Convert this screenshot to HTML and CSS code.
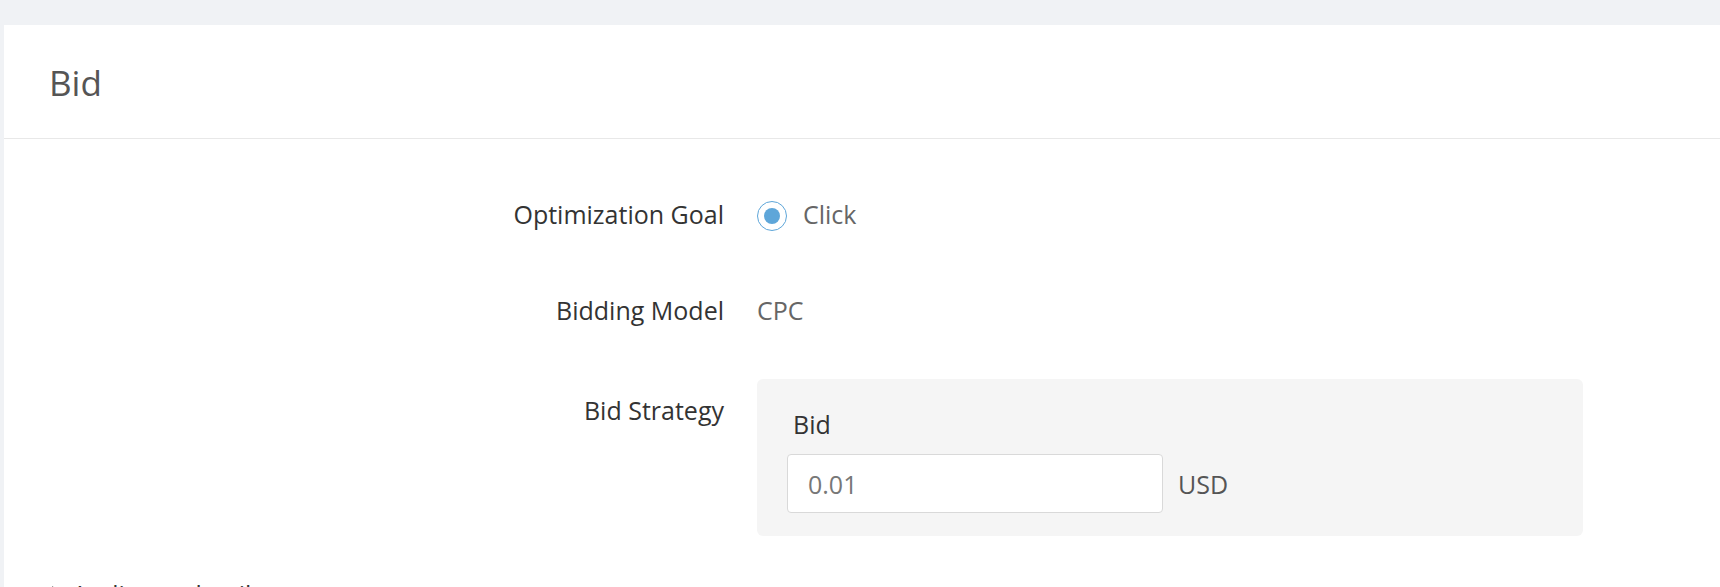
FILE: index.html
```html
<!DOCTYPE html>
<html lang="en">
<head>
<meta charset="utf-8">
<title>Bid</title>
<link rel="stylesheet" href="styles.css">
</head>
<body>
<div class="page">
  <section class="card">
    <header class="card-header"><h2 class="card-title">Bid</h2></header>
    <div class="card-body">
      <div class="form-row row-goal">
        <div class="form-label">Optimization Goal</div>
        <div class="form-control">
          <label class="radio">
            <span class="radio-circle"><span class="radio-dot"></span></span>
            <span class="radio-text">Click</span>
          </label>
        </div>
      </div>
      <div class="form-row row-model">
        <div class="form-label">Bidding Model</div>
        <div class="form-control"><span class="plain-value">CPC</span></div>
      </div>
      <div class="form-row row-strategy">
        <div class="form-label label-strategy">Bid Strategy</div>
        <div class="form-control">
          <div class="strategy-box">
            <div class="strategy-label">Bid</div>
            <div class="input-line">
              <div class="input">0.01</div>
              <span class="unit">USD</span>
            </div>
          </div>
        </div>
      </div>
      <div class="collapse-row">
        <svg class="caret" width="12" height="16" viewBox="0 0 12 16"><path d="M2 1 L9 8 L2 15" fill="none" stroke="#333" stroke-width="2"/></svg>
        <span class="collapse-text">Audience details</span>
      </div>
    </div>
  </section>
</div>
</body>
</html>
```

FILE: styles.css
```css
html, body {
  margin: 0;
  padding: 0;
  background: #f0f2f5;
  font-family: "Open Sans", "Noto Sans", sans-serif;
  overflow: hidden;
}
.page {
  padding: 25px 0 0 4px;
  height: 587px;
  box-sizing: border-box;
}
.card {
  background: #fff;
  height: 100%;
}
.card-header {
  height: 113px;
  border-bottom: 1px solid #e8e8e8;
  display: flex;
  align-items: center;
  padding-left: 45px;
}
.card-title {
  margin: 0;
  font-size: 35px;
  font-weight: 400;
  color: #555;
  line-height: 46px;
  position: relative;
  top: 1px;
}
.card-body {
  padding-top: 57px;
}
.form-row {
  display: grid;
  grid-template-columns: 720px 1fr;
  column-gap: 33px;
  font-size: 25px;
  line-height: 36px;
}
.row-goal { margin-bottom: 60px; }
.row-model { margin-bottom: 51px; }
.form-label {
  text-align: right;
  color: #333;
}
.label-strategy {
  padding-top: 13px;
}
.form-control {
  color: #666;
}
.radio {
  display: flex;
  align-items: center;
  gap: 16px;
  height: 36px;
  position: relative;
  top: 2px;
}
.radio-circle {
  width: 30px;
  height: 30px;
  box-sizing: border-box;
  border: 1px solid #5ea6d9;
  border-radius: 50%;
  display: flex;
  align-items: center;
  justify-content: center;
  background: #fff;
}
.radio-dot {
  width: 16px;
  height: 16px;
  border-radius: 50%;
  background: #5ea6d9;
}
.radio-text {
  color: #666;
  position: relative;
  top: -2px;
}
.plain-value {
  color: #666;
}
.strategy-box {
  width: 826px;
  height: 157px;
  box-sizing: border-box;
  background: #f5f5f5;
  border-radius: 6px;
  padding: 27px 0 0 30px;
}
.strategy-label {
  color: #333;
  padding-left: 6px;
  line-height: 36px;
}
.input-line {
  display: flex;
  align-items: center;
  gap: 15px;
  margin-top: 12px;
}
.input {
  width: 376px;
  height: 59px;
  box-sizing: border-box;
  background: #fff;
  border: 1px solid #d9d9d9;
  border-radius: 4px;
  padding-left: 20px;
  display: flex;
  align-items: center;
  color: #777;
}
.unit {
  color: #555;
}
.collapse-row {
  display: flex;
  align-items: center;
  gap: 10px;
  margin-top: 40px;
  padding-left: 46px;
  font-size: 25px;
  line-height: 36px;
  color: #333;
}
.caret {
  flex: none;
}
```
